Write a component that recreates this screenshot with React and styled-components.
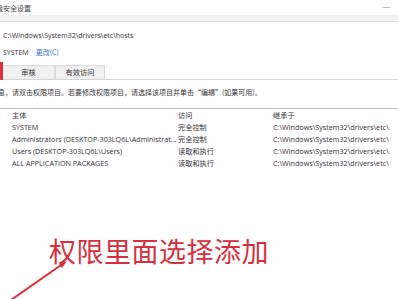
import styled, { createGlobalStyle } from "styled-components";

const GlobalStyle = createGlobalStyle`
  html, body {
    margin: 0;
    padding: 0;
    background: #ffffff;
  }
  body {
    width: 398px;
    height: 299px;
    overflow: hidden;
    font-family: "Open Sans", "Noto Sans CJK SC", sans-serif;
    color: #333;
  }
`;

const Page = styled.div`
  position: relative;
  width: 398px;
  height: 299px;
  overflow: hidden;
`;

const TitleBar = styled.div`
  display: flex;
  justify-content: space-between;
  align-items: center;
  height: 15px;
  font-size: 7px;
  color: #444;
`;

const Title = styled.span`
  margin-left: -4px;
  font-family: "Noto Sans CJK SC", sans-serif;
`;

const MinGlyph = styled.span`
  width: 7px;
  height: 1px;
  margin-right: 8px;
  background: #bbb;
`;

const Band = styled.div`
  height: 6px;
  background: #f0f0f0;
  border-bottom: 1px solid #dcdcdc;
`;

const Line = styled.div`
  height: 12px;
  line-height: 12px;
  font-size: 7px;
  white-space: nowrap;
  margin-top: ${({ $gap }) => $gap || 0}px;
  padding-left: 3px;
  color: #333;
`;

const Link = styled.span`
  margin-left: 7px;
  color: #2f6fc8;
  font-family: "Noto Sans CJK SC", sans-serif;
`;

const TabRow = styled.div`
  display: flex;
  align-items: flex-end;
  height: 17px;
  margin-top: 4px;
  border-bottom: 1px solid #d6d6d6;
`;

const RedMark = styled.div`
  width: 3px;
  height: 18px;
  margin-bottom: -1px;
  background: #e0303f;
`;

const Tab = styled.div`
  width: ${({ $w }) => $w}px;
  height: 14px;
  box-sizing: border-box;
  background: #f0f0f0;
  border: 1px solid #dadada;
  border-bottom: none;
  border-left: ${({ $first }) => ($first ? "none" : "1px solid #dadada")};
  font-size: 7.2px;
  line-height: 13px;
  text-align: center;
  font-family: "Noto Sans CJK SC", sans-serif;
`;

const Info = styled.div`
  height: 12px;
  line-height: 12px;
  margin-top: 6px;
  margin-left: -2px;
  font-size: 7px;
  white-space: nowrap;
  font-family: "Noto Sans CJK SC", sans-serif;
`;

const Table = styled.div`
  margin-top: 10px;
  border-top: 1px solid #c4c4c4;
`;

const Row = styled.div`
  display: grid;
  grid-template-columns: 166px 95px 1fr;
  padding-left: 12px;
  height: 12px;
  line-height: 12px;
  font-size: 7.2px;
  white-space: nowrap;
  color: #333;
`;

const Cell = styled.div`
  overflow: hidden;
  font-family: ${({ $cjk }) =>
    $cjk ? '"Noto Sans CJK SC", sans-serif' : '"Open Sans", "Noto Sans CJK SC", sans-serif'};
`;

const Callout = styled.div`
  margin-top: 67px;
  margin-left: 49px;
  font-size: 27px;
  line-height: 30px;
  color: #d62f3d;
  font-family: "Noto Sans CJK SC", sans-serif;
  letter-spacing: 0.5px;
`;

const ArrowSvg = styled.svg`
  position: absolute;
  left: 0;
  top: 0;
  pointer-events: none;
`;

const rows = [
  ["SYSTEM", "完全控制", "C:\\Windows\\System32\\drivers\\etc\\"],
  ["Administrators (DESKTOP-303LQ6L\\Administrat...", "完全控制", "C:\\Windows\\System32\\drivers\\etc\\"],
  ["Users (DESKTOP-303LQ6L\\Users)", "读取和执行", "C:\\Windows\\System32\\drivers\\etc\\"],
  ["ALL APPLICATION PACKAGES", "读取和执行", "C:\\Windows\\System32\\drivers\\etc\\"],
];

export default function App() {
  return (
    <Page>
      <GlobalStyle />
      <TitleBar>
        <Title>级安全设置</Title>
        <MinGlyph />
      </TitleBar>
      <Band />
      <Line $gap={8}>C:\Windows\System32\drivers\etc\hosts</Line>
      <Line $gap={4}>
        SYSTEM<Link>更改(C)</Link>
      </Line>
      <TabRow>
        <RedMark />
        <Tab $w={52} $first>审核</Tab>
        <Tab $w={50}>有效访问</Tab>
      </TabRow>
      <Info>息，请双击权限项目。若要修改权限项目，请选择该项目并单击“编辑”(如果可用)。</Info>
      <Table>
        <Row>
          <Cell $cjk>主体</Cell>
          <Cell $cjk>访问</Cell>
          <Cell $cjk>继承于</Cell>
        </Row>
        {rows.map((r) => (
          <Row key={r[0]}>
            <Cell>{r[0]}</Cell>
            <Cell $cjk>{r[1]}</Cell>
            <Cell>{r[2]}</Cell>
          </Row>
        ))}
      </Table>
      <Callout>权限里面选择添加</Callout>
      <ArrowSvg width="398" height="299" viewBox="0 0 398 299">
        <line x1="11" y1="300" x2="64" y2="263" stroke="#d62f3d" strokeWidth="2" />
        <polygon points="67,261 59,264 62,268" fill="#d62f3d" />
      </ArrowSvg>
    </Page>
  );
}
